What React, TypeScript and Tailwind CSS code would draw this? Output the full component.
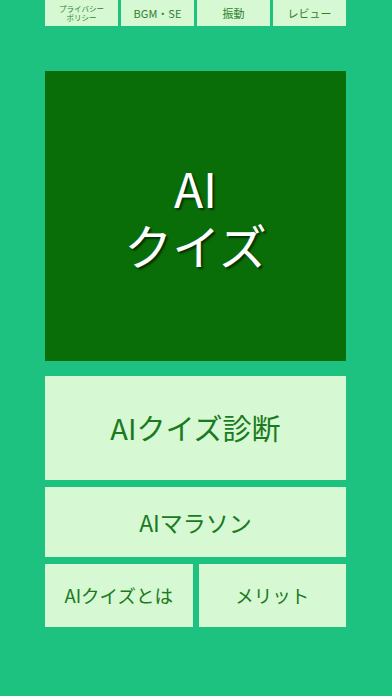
const jp = { fontFamily: '"Noto Sans CJK JP", "Noto Sans", sans-serif' };

function TopButton({ children }: { children: React.ReactNode }) {
  return (
    <button className="flex-1 h-[26px] bg-[#d6f8d2] text-[#2f802f] flex items-center justify-center leading-none">
      {children}
    </button>
  );
}

export default function App() {
  return (
    <div className="w-[392px] h-[696px] bg-[#1dc280] pl-[45px] pr-[46px] flex flex-col" style={jp}>
      <div className="flex gap-[3px]">
        <TopButton>
          <span className="text-[7.5px] leading-[9.5px] text-center">
            プライバシー
            <br />
            ポリシー
          </span>
        </TopButton>
        <TopButton>
          <span className="text-[11px]">BGM・SE</span>
        </TopButton>
        <TopButton>
          <span className="text-[11px]">振動</span>
        </TopButton>
        <TopButton>
          <span className="text-[11px]">レビュー</span>
        </TopButton>
      </div>

      <button className="mt-[45px] h-[290px] w-full bg-[#0a6e08] flex items-center justify-center text-white [text-shadow:2px_2px_2px_rgba(0,0,0,0.55)]">
        <span className="text-[48px] leading-[57px] text-center">
          AI
          <br />
          クイズ
        </span>
      </button>

      <button className="mt-[15px] h-[104px] w-full bg-[#d6f8d2] text-[#1a7a1e] text-[29px] flex items-center justify-center">
        AIクイズ診断
      </button>

      <button className="mt-[7px] h-[70px] w-full bg-[#d6f8d2] text-[#1a7a1e] text-[23px] flex items-center justify-center">
        AIマラソン
      </button>

      <div className="mt-[7px] flex gap-[6px]">
        <button className="flex-1 h-[63px] bg-[#d6f8d2] text-[#1a7a1e] text-[18.5px] flex items-center justify-center">
          AIクイズとは
        </button>
        <button className="flex-1 h-[63px] bg-[#d6f8d2] text-[#1a7a1e] text-[18.5px] flex items-center justify-center">
          メリット
        </button>
      </div>
    </div>
  );
}
